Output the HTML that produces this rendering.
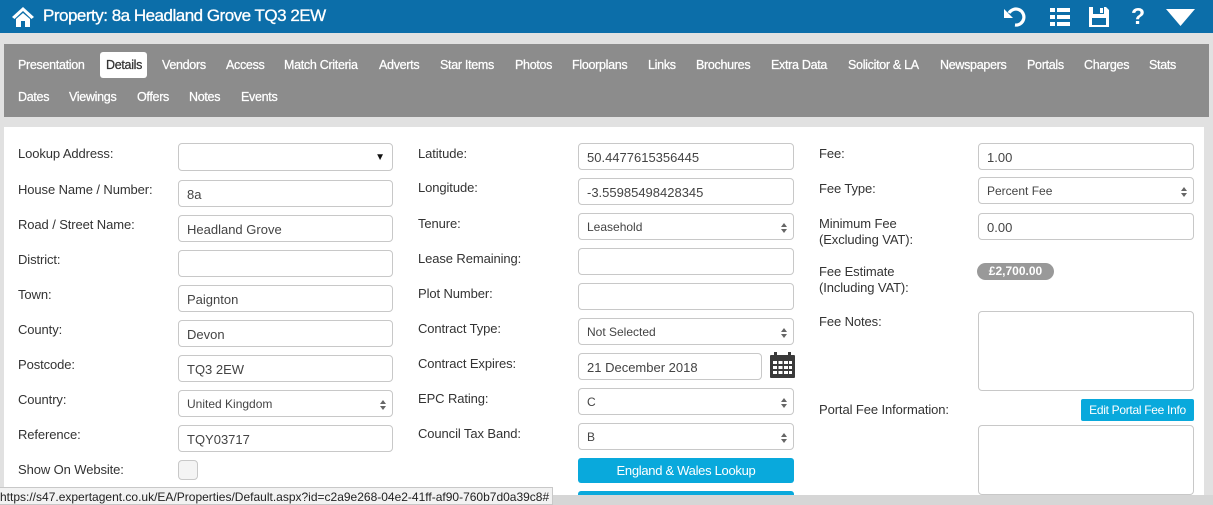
<!DOCTYPE html>
<html><head><meta charset="utf-8"><style>
*{box-sizing:border-box;margin:0;padding:0}
body{width:1213px;height:505px;overflow:hidden;background:#e1e1e1;font-family:"Liberation Sans",Arial,sans-serif;position:relative}
.a{position:absolute}
#hdr{left:0;top:0;width:1213px;height:33px;background:#0c6ea9}
#title{left:43px;top:6px;color:#fff;font-size:17px;letter-spacing:-0.5px;-webkit-text-stroke:0.3px #fff}
#tabs{left:4px;top:44px;width:1205px;height:73px;background:#8c8c8c}
.t{position:absolute;color:#fff;font-size:12.5px;letter-spacing:-0.3px;top:58px;-webkit-text-stroke:0.25px #fff}
.t2{top:90px}
#det{left:100px;top:52px;width:47px;height:26px;background:#fff;border-radius:3px}
#panel{left:4px;top:127px;width:1200px;height:368px;background:#fff}
.l{position:absolute;font-size:13px;color:#333;letter-spacing:-0.1px;line-height:16px}
.i{position:absolute;height:27px;border:1px solid #c8c8c8;border-radius:4px;background:#fff;font-size:13px;color:#444;padding:6px 8px;line-height:15px}
.s{font-size:12px}
.s::after{content:"";position:absolute;right:6px;top:9px;width:0;height:0;border-left:3px solid transparent;border-right:3px solid transparent;border-bottom:4px solid #666}
.s::before{content:"";position:absolute;right:6px;top:15px;width:0;height:0;border-left:3px solid transparent;border-right:3px solid transparent;border-top:4px solid #666}
.btn{position:absolute;background:#09a9dc;color:#fff;font-size:13px;text-align:center;border-radius:3px;letter-spacing:-0.3px}
</style></head><body>
<div id="hdr" class="a"></div>
<svg class="a" style="left:11px;top:6px" width="24" height="22" viewBox="0 0 24 22"><path d="M12 1 L1 11 L3.5 13 L12 5 L20.5 13 L23 11 Z" fill="#fff"/><path d="M5 13 L12 7 L19 13 V21 H14 V15 H10 V21 H5 Z" fill="#fff"/></svg>
<div id="title" class="a">Property: 8a Headland Grove TQ3 2EW</div>
<svg class="a" style="left:1002px;top:6px" width="26" height="22" viewBox="0 0 26 22"><path d="M7 7 A8 8 0 1 1 13 19" stroke="#fff" stroke-width="3.2" fill="none"/><path d="M2 3 L2 12 L11 12 Z" fill="#fff"/></svg>
<svg class="a" style="left:1050px;top:8px" width="20" height="18" viewBox="0 0 20 18"><g fill="#fff"><rect x="0" y="0" width="5" height="4"/><rect x="7" y="0" width="13" height="4"/><rect x="0" y="7" width="5" height="4"/><rect x="7" y="7" width="13" height="4"/><rect x="0" y="14" width="5" height="4"/><rect x="7" y="14" width="13" height="4"/></g></svg>
<svg class="a" style="left:1089px;top:7px" width="20" height="20" viewBox="0 0 20 20"><path d="M0 0 H17 L20 3 V20 H0 Z" fill="#fff"/><rect x="4" y="0" width="11" height="7" fill="#0c6ea9"/><rect x="11" y="1" width="3" height="5" fill="#fff"/><rect x="3" y="11" width="14" height="7" fill="#0c6ea9"/></svg>
<div class="a" style="left:1131px;top:3px;color:#fff;font-size:23px;font-weight:bold">?</div>
<svg class="a" style="left:1166px;top:9px" width="29" height="17" viewBox="0 0 29 17"><path d="M0 0 H29 L14.5 17 Z" fill="#fff"/></svg>
<div id="tabs" class="a"></div>
<div id="det" class="a"></div>
<div class="t" style="left:18px">Presentation</div>
<div class="t" style="left:106px;color:#333;-webkit-text-stroke:0.25px #333">Details</div>
<div class="t" style="left:162px">Vendors</div>
<div class="t" style="left:226px">Access</div>
<div class="t" style="left:284px">Match Criteria</div>
<div class="t" style="left:379px">Adverts</div>
<div class="t" style="left:440px">Star Items</div>
<div class="t" style="left:515px">Photos</div>
<div class="t" style="left:572px">Floorplans</div>
<div class="t" style="left:648px">Links</div>
<div class="t" style="left:696px">Brochures</div>
<div class="t" style="left:771px">Extra Data</div>
<div class="t" style="left:848px">Solicitor &amp; LA</div>
<div class="t" style="left:940px">Newspapers</div>
<div class="t" style="left:1027px">Portals</div>
<div class="t" style="left:1084px">Charges</div>
<div class="t" style="left:1149px">Stats</div>
<div class="t t2" style="left:18px">Dates</div>
<div class="t t2" style="left:69px">Viewings</div>
<div class="t t2" style="left:137px">Offers</div>
<div class="t t2" style="left:189px">Notes</div>
<div class="t t2" style="left:241px">Events</div>
<div id="panel" class="a"></div>

<div class="l" style="left:18px;top:146px">Lookup Address:</div>
<div class="i" style="left:178px;top:143px;width:215px;height:28px"><span style="position:absolute;right:7px;top:6px;font-size:10px;color:#111">▼</span></div>
<div class="l" style="left:18px;top:182px">House Name / Number:</div>
<div class="i" style="left:178px;top:180px;width:215px">8a</div>
<div class="l" style="left:18px;top:217px">Road / Street Name:</div>
<div class="i" style="left:178px;top:215px;width:215px">Headland Grove</div>
<div class="l" style="left:18px;top:252px">District:</div>
<div class="i" style="left:178px;top:250px;width:215px"></div>
<div class="l" style="left:18px;top:287px">Town:</div>
<div class="i" style="left:178px;top:285px;width:215px">Paignton</div>
<div class="l" style="left:18px;top:322px">County:</div>
<div class="i" style="left:178px;top:320px;width:215px">Devon</div>
<div class="l" style="left:18px;top:357px">Postcode:</div>
<div class="i" style="left:178px;top:355px;width:215px">TQ3 2EW</div>
<div class="l" style="left:18px;top:392px">Country:</div>
<div class="i s" style="left:178px;top:390px;width:215px">United Kingdom</div>
<div class="l" style="left:18px;top:427px">Reference:</div>
<div class="i" style="left:178px;top:425px;width:215px">TQY03717</div>
<div class="l" style="left:18px;top:462px">Show On Website:</div>
<div class="i" style="left:178px;top:460px;width:20px;height:20px;background:#f4f4f4"></div>

<div class="l" style="left:418px;top:146px">Latitude:</div>
<div class="i" style="left:578px;top:143px;width:216px">50.4477615356445</div>
<div class="l" style="left:418px;top:180px">Longitude:</div>
<div class="i" style="left:578px;top:178px;width:216px">-3.55985498428345</div>
<div class="l" style="left:418px;top:216px">Tenure:</div>
<div class="i s" style="left:578px;top:213px;width:216px">Leasehold</div>
<div class="l" style="left:418px;top:251px">Lease Remaining:</div>
<div class="i" style="left:578px;top:248px;width:216px"></div>
<div class="l" style="left:418px;top:286px">Plot Number:</div>
<div class="i" style="left:578px;top:283px;width:216px"></div>
<div class="l" style="left:418px;top:321px">Contract Type:</div>
<div class="i s" style="left:578px;top:318px;width:216px">Not Selected</div>
<div class="l" style="left:418px;top:356px">Contract Expires:</div>
<div class="i" style="left:578px;top:353px;width:184px">21 December 2018</div>
<svg class="a" style="left:770px;top:352px" width="25" height="26" viewBox="0 0 25 26"><rect x="0" y="3" width="25" height="23" rx="1" fill="#3a3a3a"/><rect x="4" y="0" width="3" height="6" fill="#3a3a3a"/><rect x="18" y="0" width="3" height="6" fill="#3a3a3a"/><g fill="#fff"><rect x="3" y="9" width="4" height="3"/><rect x="8.5" y="9" width="4" height="3"/><rect x="14" y="9" width="4" height="3"/><rect x="19" y="9" width="3" height="3"/><rect x="3" y="14" width="4" height="3"/><rect x="8.5" y="14" width="4" height="3"/><rect x="14" y="14" width="4" height="3"/><rect x="19" y="14" width="3" height="3"/><rect x="3" y="19" width="4" height="3"/><rect x="8.5" y="19" width="4" height="3"/><rect x="14" y="19" width="4" height="3"/><rect x="19" y="19" width="3" height="3"/></g></svg>
<div class="l" style="left:418px;top:391px">EPC Rating:</div>
<div class="i s" style="left:578px;top:388px;width:216px">C</div>
<div class="l" style="left:418px;top:426px">Council Tax Band:</div>
<div class="i s" style="left:578px;top:423px;width:216px">B</div>
<div class="btn" style="left:578px;top:458px;width:216px;height:25px;line-height:25px">England &amp; Wales Lookup</div>
<div class="btn" style="left:578px;top:491px;width:216px;height:14px"></div>

<div class="l" style="left:819px;top:146px">Fee:</div>
<div class="i" style="left:978px;top:143px;width:216px">1.00</div>
<div class="l" style="left:819px;top:181px">Fee Type:</div>
<div class="i s" style="left:978px;top:177px;width:216px">Percent Fee</div>
<div class="l" style="left:819px;top:216px">Minimum Fee<br>(Excluding VAT):</div>
<div class="i" style="left:978px;top:213px;width:216px">0.00</div>
<div class="l" style="left:819px;top:264px">Fee Estimate<br>(Including VAT):</div>
<div class="a" style="left:977px;top:263px;width:77px;height:17px;background:#999;border-radius:9px;color:#fff;font-size:12px;font-weight:bold;text-align:center;line-height:17px">£2,700.00</div>
<div class="l" style="left:819px;top:314px">Fee Notes:</div>
<div class="i" style="left:978px;top:311px;width:216px;height:80px"></div>
<div class="l" style="left:819px;top:402px">Portal Fee Information:</div>
<div class="btn" style="left:1081px;top:399px;width:113px;height:22px;line-height:22px;font-size:12px;border-radius:2px">Edit Portal Fee Info</div>
<div class="i" style="left:978px;top:425px;width:216px;height:70px"></div>
<div class="a" style="left:0;top:495px;width:1213px;height:10px;background:#d6d6d6"></div>
<div class="a" style="left:0;top:487px;width:553px;height:18px;background:#f2f2f2;border:1px solid #c8c8c8;border-left:none;font-size:12px;color:#222;padding:2px 0 0 0;white-space:nowrap;overflow:hidden">https://s47.expertagent.co.uk/EA/Properties/Default.aspx?id=c2a9e268-04e2-41ff-af90-760b7d0a39c8#</div>
</body></html>
